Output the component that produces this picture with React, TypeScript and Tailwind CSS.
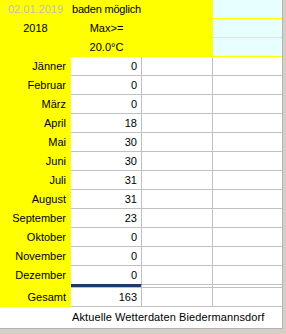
import type { ReactNode } from 'react';

// monthly bathing days, 2018
const months: [string, number][] = [
    ['Jänner', 0],
    ['Februar', 0],
    ['März', 0],
    ['April', 18],
    ['Mai', 30],
    ['Juni', 30],
    ['Juli', 31],
    ['August', 31],
    ['September', 23],
    ['Oktober', 0],
    ['November', 0],
    ['Dezember', 0],
];

function HeaderRow({ left, mid }: { left?: ReactNode; mid?: ReactNode }) {
    return (
        <div className="grid grid-cols-[71px_71px_71px_69px] h-[19px]">
            <div className="bg-[#ffff00] flex items-center justify-center whitespace-nowrap">{left}</div>
            <div className="bg-[#ffff00] flex items-center justify-center whitespace-nowrap">{mid}</div>
            <div className="bg-[#ffff00]" />
            <div className="bg-[#e8ffff] border-b border-[#ffff00]" />
        </div>
    );
}

export default function App() {
    const total = months.reduce((sum, m) => sum + m[1], 0);

    return (
        <div
            className="min-h-screen bg-[#d4d0c8] text-[11px] text-black leading-none"
            style={{ fontFamily: '"Liberation Sans", Arial, sans-serif' }}
        >
            <div className="w-[283px] bg-white border-r border-b border-[#b4b4b4]">
                {/* Header */}
                <HeaderRow
                    left={<span className="text-[#c0c0c0]">02.01.2019</span>}
                    mid={<span className="tracking-[-0.2px]">baden möglich</span>}
                />
                <HeaderRow left={<span>2018</span>} mid={<span>Max&gt;=</span>} />
                <HeaderRow mid={<span>20.0°C</span>} />

                {/* Months */}
                {months.map(([name, value], i) => (
                    <div key={name} className="grid grid-cols-[71px_71px_71px_69px] h-[19px]">
                        <div className="bg-[#ffff00] flex items-center justify-end pr-[5px]">
                            {name}
                        </div>
                        <div
                            className={`flex items-center justify-end pr-[4px] border-r border-b border-r-[#c0c0c0] ${
                                i === months.length - 1 ? 'border-b-[#1c3a6e]' : 'border-b-[#c0c0c0]'
                            }`}
                        >
                            {value}
                        </div>
                        <div className="border-r border-b border-[#c0c0c0]" />
                        <div className="border-b border-[#c0c0c0]" />
                    </div>
                ))}

                {/* Separator */}
                <div className="grid grid-cols-[71px_71px_71px_69px] h-[3px]">
                    <div className="bg-[#ffff00]" />
                    <div className="bg-[#1c3a6e] border-r border-b border-[#c0c0c0]" />
                    <div className="border-r border-b border-[#c0c0c0]" />
                    <div className="border-b border-[#c0c0c0]" />
                </div>

                {/* Total */}
                <div className="grid grid-cols-[71px_71px_71px_69px] h-[19px]">
                    <div className="bg-[#ffff00] flex items-center justify-end pr-[5px]">Gesamt</div>
                    <div className="flex items-center justify-end pr-[4px] border-r border-b border-[#c0c0c0]">
                        {total}
                    </div>
                    <div className="border-r border-b border-[#c0c0c0]" />
                    <div className="border-b border-[#c0c0c0]" />
                </div>

                {/* Footer */}
                <div className="h-[21px] flex items-center pl-[72px] tracking-[0.1px]">
                    Aktuelle Wetterdaten Biedermannsdorf
                </div>
            </div>
        </div>
    );
}
